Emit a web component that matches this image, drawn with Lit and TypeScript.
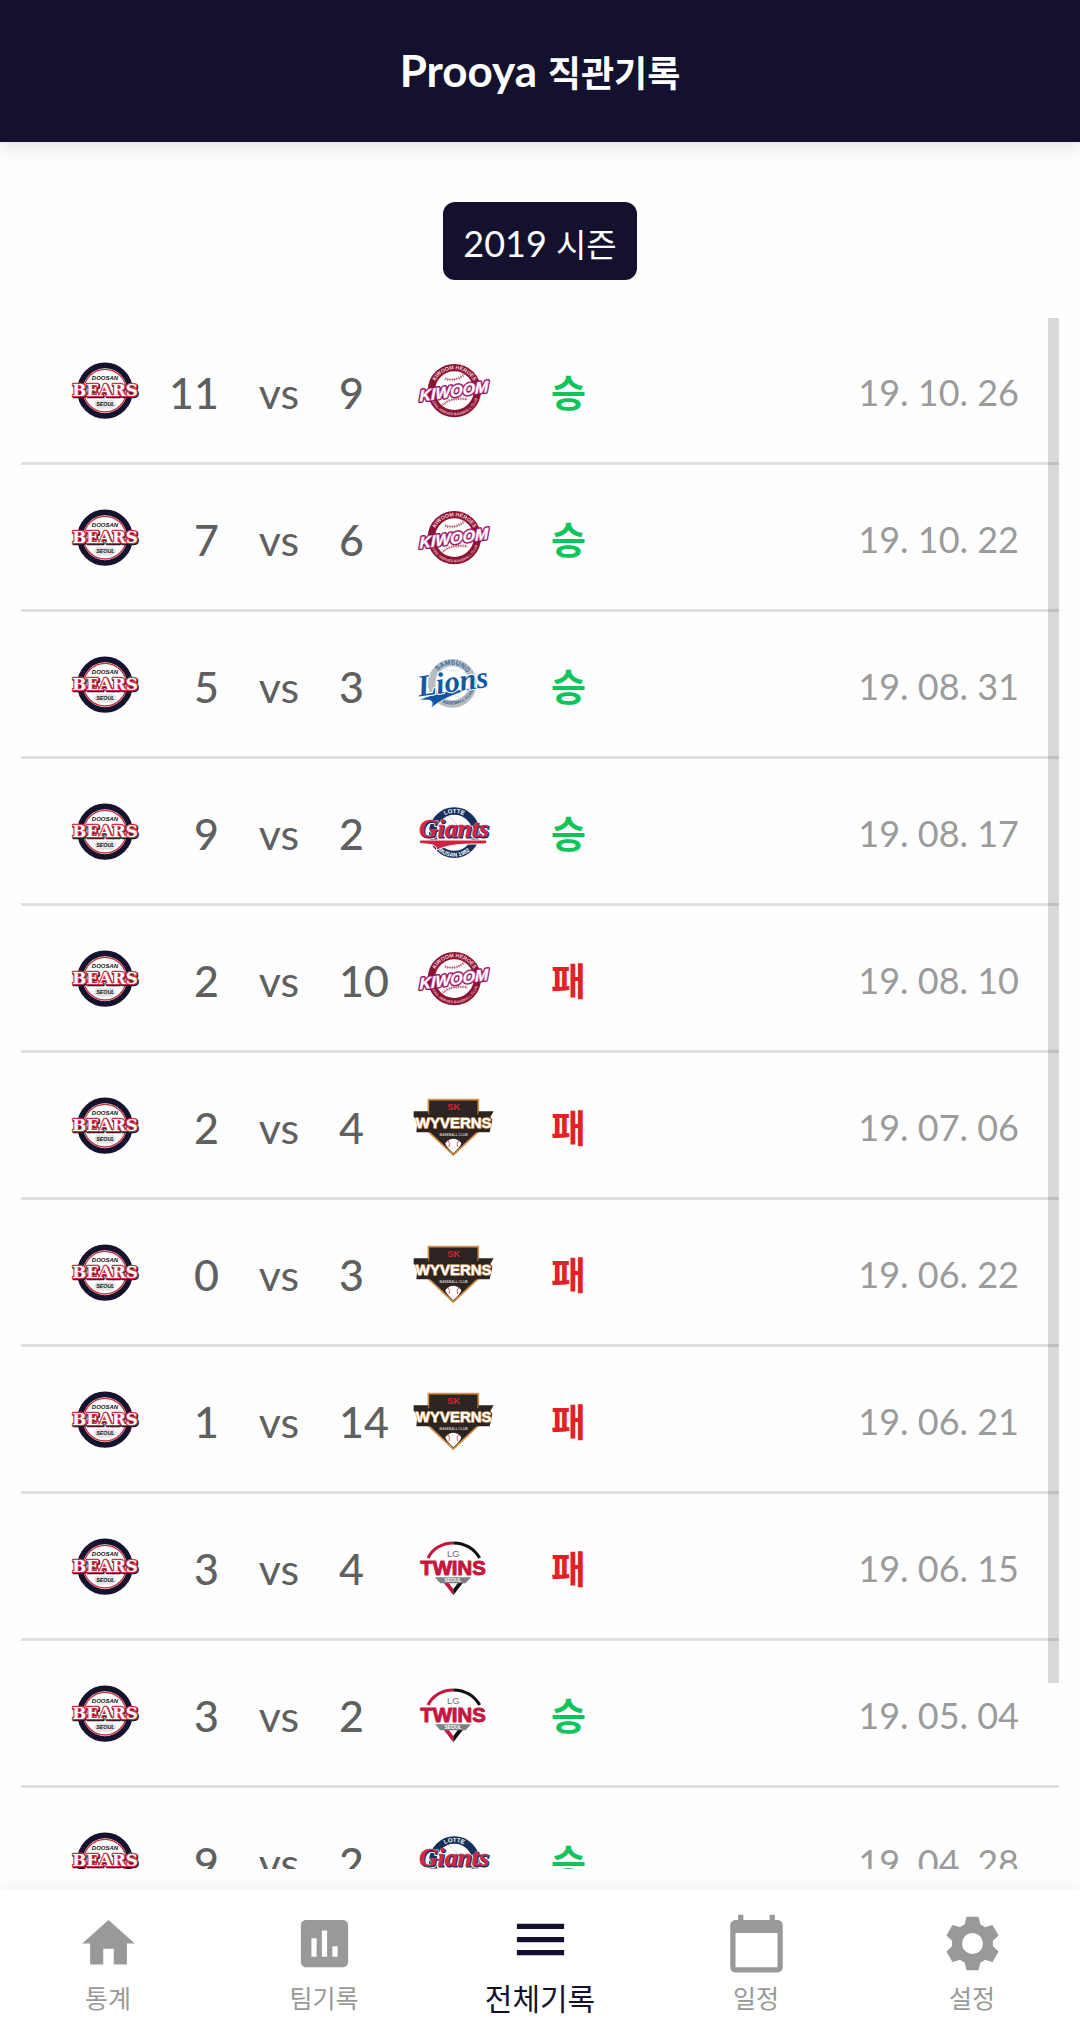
import { LitElement, html, css, svg } from "lit";
import { customElement, property, state } from "lit/decorators.js";
import { classMap } from "lit/directives/class-map.js";

type Team = "bears" | "kiwoom" | "lions" | "giants" | "wyverns" | "twins";

interface Game {
  mine: number;
  theirs: number;
  opponent: Team;
  date: string;
}

const GAMES: Game[] = [
  { mine: 11, theirs: 9, opponent: "kiwoom", date: "19. 10. 26" },
  { mine: 7, theirs: 6, opponent: "kiwoom", date: "19. 10. 22" },
  { mine: 5, theirs: 3, opponent: "lions", date: "19. 08. 31" },
  { mine: 9, theirs: 2, opponent: "giants", date: "19. 08. 17" },
  { mine: 2, theirs: 10, opponent: "kiwoom", date: "19. 08. 10" },
  { mine: 2, theirs: 4, opponent: "wyverns", date: "19. 07. 06" },
  { mine: 0, theirs: 3, opponent: "wyverns", date: "19. 06. 22" },
  { mine: 1, theirs: 14, opponent: "wyverns", date: "19. 06. 21" },
  { mine: 3, theirs: 4, opponent: "twins", date: "19. 06. 15" },
  { mine: 3, theirs: 2, opponent: "twins", date: "19. 05. 04" },
  { mine: 9, theirs: 2, opponent: "giants", date: "19. 04. 28" },
];

const bears = svg`
  <ellipse cx="138" cy="122" rx="75" ry="76" fill="#fff" stroke="#15122e" stroke-width="17"/>
  <circle cx="138" cy="122" r="64" fill="#fff" stroke="#c8303c" stroke-width="4"/>
  <path d="M112 150h52l8 12-12 14h-44l-12-14z" fill="#e4e4e4"/>
  <text class="sans" x="138" y="89" font-size="18" font-style="italic" fill="#111">DOOSAN</text>
  <text class="slab" x="140" y="141" font-size="50" fill="#15122e" stroke="#15122e" stroke-width="8">BEARS</text>
  <text class="slab" x="138" y="139" font-size="50" fill="#fff" stroke="#d0303f" stroke-width="7">BEARS</text>
  <text class="sans" x="139" y="168" font-size="16" font-style="italic" fill="#111">SEOUL</text>`;

const kiwoom = svg`
  <defs>
    <path id="kt" d="M96 122a64 64 0 0 1 128 0"/>
    <path id="kb" d="M86 122a74 74 0 0 0 148 0"/>
  </defs>
  <circle cx="160" cy="122" r="69" fill="#fff" stroke="#8b1231" stroke-width="22"/>
  <path d="M132 86q38 12 64-20M122 168q22-28 78-20" fill="none" stroke="#b0485e" stroke-width="2"/>
  <path d="M132 86q38 12 64-20M122 168q22-28 78-20" fill="none" stroke="#b0485e" stroke-width="9" stroke-dasharray="2 5"/>
  <text class="arc" font-size="16" fill="#f3d3da"><textPath href="#kt" startOffset="50%">KIWOOM HEROES</textPath></text>
  <text class="arc" font-size="11" fill="#e5b5c0"><textPath href="#kb" startOffset="50%">SEOUL HEROES BASEBALL CLUB</textPath></text>
  <g transform="rotate(-8 158 124) skewX(-8)">
    <text class="sans" x="176" y="140" font-size="48" font-style="italic" fill="#8b1250" stroke="#8b1250" stroke-width="10">KIWOOM</text>
    <text class="sans" x="176" y="140" font-size="48" font-style="italic" fill="#fff" stroke="#d75fae" stroke-width="4">KIWOOM</text>
  </g>`;

const lions = svg`
  <defs>
    <path id="lt" d="M96 118a56 56 0 0 1 112 0"/>
    <path id="lb" d="M92 150a72 72 0 0 0 131-32"/>
  </defs>
  <circle cx="154" cy="118" r="62" fill="#fff" stroke="#b9bcc0" stroke-width="22"/>
  <path d="M128 72q28 16 56 0M128 168q24-22 52-6" fill="none" stroke="#c6c9cc" stroke-width="5" stroke-dasharray="2 4"/>
  <text class="arc" font-size="20" fill="#2a6ea8"><textPath href="#lt" startOffset="52%">SAMSUNG</textPath></text>
  <path d="M54 168C110 142 170 138 236 130C178 144 132 158 90 192C97 176 94 170 82 168Z" fill="#1355a0" stroke="#fff" stroke-width="2"/>
  <text class="arc" font-size="13" fill="#2a5d92"><textPath href="#lb" startOffset="56%">BASEBALL CLUB</textPath></text>
  <g transform="rotate(-8 158 120)">
    <text class="serif" x="156" y="143" font-size="91" fill="#1257a4" stroke="#fff" stroke-width="6">Lions</text>
  </g>`;

const giants = svg`
  <defs>
    <path id="gt" d="M101 125a59 59 0 0 1 118 0"/>
    <path id="gb" d="M88 125a72 72 0 0 0 144 0"/>
  </defs>
  <circle cx="160" cy="125" r="65" fill="#fff" stroke="#16305b" stroke-width="22"/>
  <path d="M142 76q24 12 30 40" fill="none" stroke="#d3d7dc" stroke-width="3"/>
  <text class="arc" font-size="18" fill="#fff"><textPath href="#gt" startOffset="50%">LOTTE</textPath></text>
  <text class="arc" font-size="17" fill="#fff"><textPath href="#gb" startOffset="50%">BUSAN 1982</textPath></text>
  <path d="M56 147H256Q262 159 246 159C180 158 136 162 106 178Q110 166 92 161L56 157Z" fill="#cf2342" stroke="#fff" stroke-width="3"/>
  <text class="serif" x="161" y="140" font-size="77" fill="#16305b" stroke="#fff" stroke-width="8">Giants</text>
  <text class="serif" x="162" y="141" font-size="77" fill="#16305b" stroke="#16305b" stroke-width="3">Giants</text>
  <text class="serif" x="159" y="138" font-size="77" fill="#d2264a" stroke="#d2264a" stroke-width="1">Giants</text>`;

const wyverns = svg`
  <path d="M82 44H232V140L157 210L82 140Z" fill="#2c2421" stroke="#d9914a" stroke-width="5"/>
  <path d="M38 79H82V88H232V79H278L268 96L274 104L266 142H46L50 104L38 96Z" fill="#2c2421"/>
  <path d="M104 138H210L157 198Z" fill="#2c2421"/>
  <text class="sans" x="158" y="76" font-size="28" fill="#d9243a">SK</text>
  <text class="sans" x="158" y="130" font-size="45" fill="#fff" stroke="#d9a066" stroke-width="4">WYVERNS</text>
  <text class="sans" x="158" y="152" font-size="10" fill="#c9c0ba">BASEBALL CLUB</text>
  <path d="M133 174Q157 148 181 174Q180 184 157 205Q134 184 133 174Z" fill="#fff"/>
  <path d="M140 166q10 8 4 20M174 166q-10 8-4 20" fill="none" stroke="#d9606a" stroke-width="3"/>`;

const twins = svg`
  <path d="M81 96Q104 52 157 51" fill="none" stroke="#c4163f" stroke-width="9"/>
  <path d="M157 51Q210 52 236 96" fill="none" stroke="#111" stroke-width="9"/>
  <text class="plain" x="157" y="93" font-size="28" fill="#6b6b6b">LG</text>
  <path d="M128 170H143L157 189V208Z" fill="#c4163f"/>
  <path d="M186 170H171L157 189V208Z" fill="#111"/>
  <path d="M102 154H210L194 172H118Z" fill="#7d7f82"/>
  <text class="sans" x="156" y="169" font-size="15" fill="#fff">SEOUL</text>
  <text class="sans" x="156" y="147" font-size="61" fill="#c4163f" stroke="#c4163f" stroke-width="3">TWINS</text>`;

const LOGOS = { bears, kiwoom, lions, giants, wyverns, twins };
const NAMES: Record<Team, string> = {
  bears: "Doosan Bears",
  kiwoom: "Kiwoom Heroes",
  lions: "Samsung Lions",
  giants: "Lotte Giants",
  wyverns: "SK Wyverns",
  twins: "LG Twins",
};

@customElement("team-logo")
export class TeamLogo extends LitElement {
  @property() team: Team = "bears";

  static styles = css`
    :host { display: block; }
    .logo { display: block; width: 100%; height: auto; }
    text { text-anchor: middle; paint-order: stroke; stroke-linejoin: round; font-weight: 700; }
    .sans, .arc { font-family: "Liberation Sans", sans-serif; }
    .plain { font-family: "Liberation Sans", sans-serif; font-weight: 400; }
    .slab { font-family: "DejaVu Serif", serif; }
    .serif { font-family: "Liberation Serif", serif; font-style: italic; }
  `;

  render() {
    return html`<svg class="logo" viewBox="0 0 300 240" role="img" aria-label=${NAMES[this.team]}>
      ${LOGOS[this.team]}
    </svg>`;
  }
}

const TOOTH = "M-2.1-9.9L2.1-9.9L3-6.2L-3-6.2Z";
const TABS = [
  { label: "통계", icon: svg`<path d="M10 20v-6h4v6h5v-8h3L12 3 2 12h3v8z"/>` },
  {
    label: "팀기록",
    icon: svg`<path d="M19 3H5c-1.1 0-2 .9-2 2v14c0 1.1.9 2 2 2h14c1.1 0 2-.9 2-2V5c0-1.1-.9-2-2-2zM9 17H7v-7h2v7zm4 0h-2V7h2v10zm4 0h-2v-4h2v4z"/>`,
  },
  { label: "전체기록", icon: svg`<path d="M3 18h18v-2H3v2zm0-5h18v-2H3v2zm0-7v2h18V6H3z"/>` },
  {
    label: "일정",
    icon: svg`<path d="M20 3h-1V1h-2v2H7V1H5v2H4c-1.1 0-2 .9-2 2v16c0 1.1.9 2 2 2h16c1.1 0 2-.9 2-2V5c0-1.1-.9-2-2-2zm0 18H4V8h16v13z"/>`,
  },
  {
    label: "설정",
    icon: svg`<circle cx="12" cy="12" r="5.9" fill="none" stroke="currentColor" stroke-width="3.8"/>
      <g transform="translate(12 12)" stroke="currentColor" stroke-width=".5" stroke-linejoin="round">
        ${[0, 60, 120, 180, 240, 300].map((a) => svg`<path d=${TOOTH} transform="rotate(${a})"/>`)}
      </g>`,
  },
];

@customElement("app-root")
export class AppRoot extends LitElement {
  @state() private active = 2;

  static styles = css`
    :host {
      display: flex;
      flex-direction: column;
      height: 100vh;
      background: #fefefe;
      color: #606060;
      font-family: Lato, "Noto Sans CJK KR", sans-serif;
    }
    .bar {
      display: flex;
      align-items: center;
      justify-content: center;
      height: 142px;
      flex: none;
      background: #13112e;
      color: #fff;
      box-shadow: 0 2px 20px rgba(0, 0, 0, 0.16);
    }
    .title { margin: 0; font-size: 44px; line-height: 56px; font-weight: 700; }
    .title .ko { font-size: 36px; }
    .filter { display: flex; justify-content: center; flex: none; padding: 60px 0 38px; }
    .season {
      height: 78px;
      padding: 4px 20px 0;
      border: 0;
      border-radius: 12px;
      background: #13112e;
      color: #fff;
      font-family: inherit;
      font-size: 36px;
      line-height: 48px;
    }
    .season .ko { font-size: 33px; }
    .panel { position: relative; flex: 1; min-height: 0; margin: 0 21px 21px; }
    .games {
      height: 100%;
      margin: 0;
      padding: 0;
      overflow-y: auto;
      scrollbar-width: none;
      list-style: none;
    }
    .game {
      display: grid;
      grid-template-columns: 100px 60px 120px 62px 100px 1fr auto;
      align-items: center;
      height: 144px;
      padding: 0 40px 0 38px;
      border-bottom: 3px solid #e0e0e0;
      font-size: 43px;
      line-height: 56px;
    }
    .mine, .theirs { padding-top: 6px; font-weight: 500; }
    .mine { text-align: right; }
    .versus { padding-top: 6px; text-align: center; }
    .result { padding: 4px 0 0 50px; font-size: 38px; font-weight: 700; }
    .win { color: #0fc45a; }
    .loss { color: #e51f26; }
    .date { padding-top: 4px; color: #9b9b9b; font-size: 36px; }
    .thumb {
      position: absolute;
      top: 0;
      right: 0;
      width: 11px;
      height: 88%;
      background: rgba(0, 0, 0, 0.145);
    }
    .tabs {
      display: flex;
      flex: none;
      height: 147px;
      background: #fff;
      box-shadow: 0 -2px 16px rgba(0, 0, 0, 0.06);
    }
    .tab {
      display: flex;
      flex: 1;
      flex-direction: column;
      align-items: center;
      justify-content: center;
      gap: 5px;
      padding: 0;
      border: 0;
      background: none;
      color: #999;
      font-family: inherit;
      font-size: 25px;
      line-height: 36px;
    }
    .current { color: #13112e; font-size: 30px; line-height: 44px; }
    .icon { width: 63px; height: 63px; fill: currentColor; }
  `;

  render() {
    return html`
      <header class="bar"><h1 class="title">Prooya <span class="ko">직관기록</span></h1></header>
      <div class="filter">
        <button class="season" type="button">2019 <span class="ko">시즌</span></button>
      </div>
      <main class="panel">
        <ul class="games">
          ${GAMES.map((g) => {
            const win = g.mine > g.theirs;
            return html`<li class="game">
              <team-logo team="bears"></team-logo>
              <span class="mine">${g.mine}</span>
              <span class="versus">vs</span>
              <span class="theirs">${g.theirs}</span>
              <team-logo team=${g.opponent}></team-logo>
              <span class=${classMap({ result: true, win, loss: !win })}>${win ? "승" : "패"}</span>
              <time class="date">${g.date}</time>
            </li>`;
          })}
        </ul>
        <div class="thumb"></div>
      </main>
      <nav class="tabs">
        ${TABS.map(
          (t, i) => html`<button
            type="button"
            class=${classMap({ tab: true, current: i === this.active })}
            @click=${() => (this.active = i)}
          >
            <svg class="icon" viewBox="0 0 24 24" aria-hidden="true">${t.icon}</svg>
            <span>${t.label}</span>
          </button>`
        )}
      </nav>
    `;
  }
}
